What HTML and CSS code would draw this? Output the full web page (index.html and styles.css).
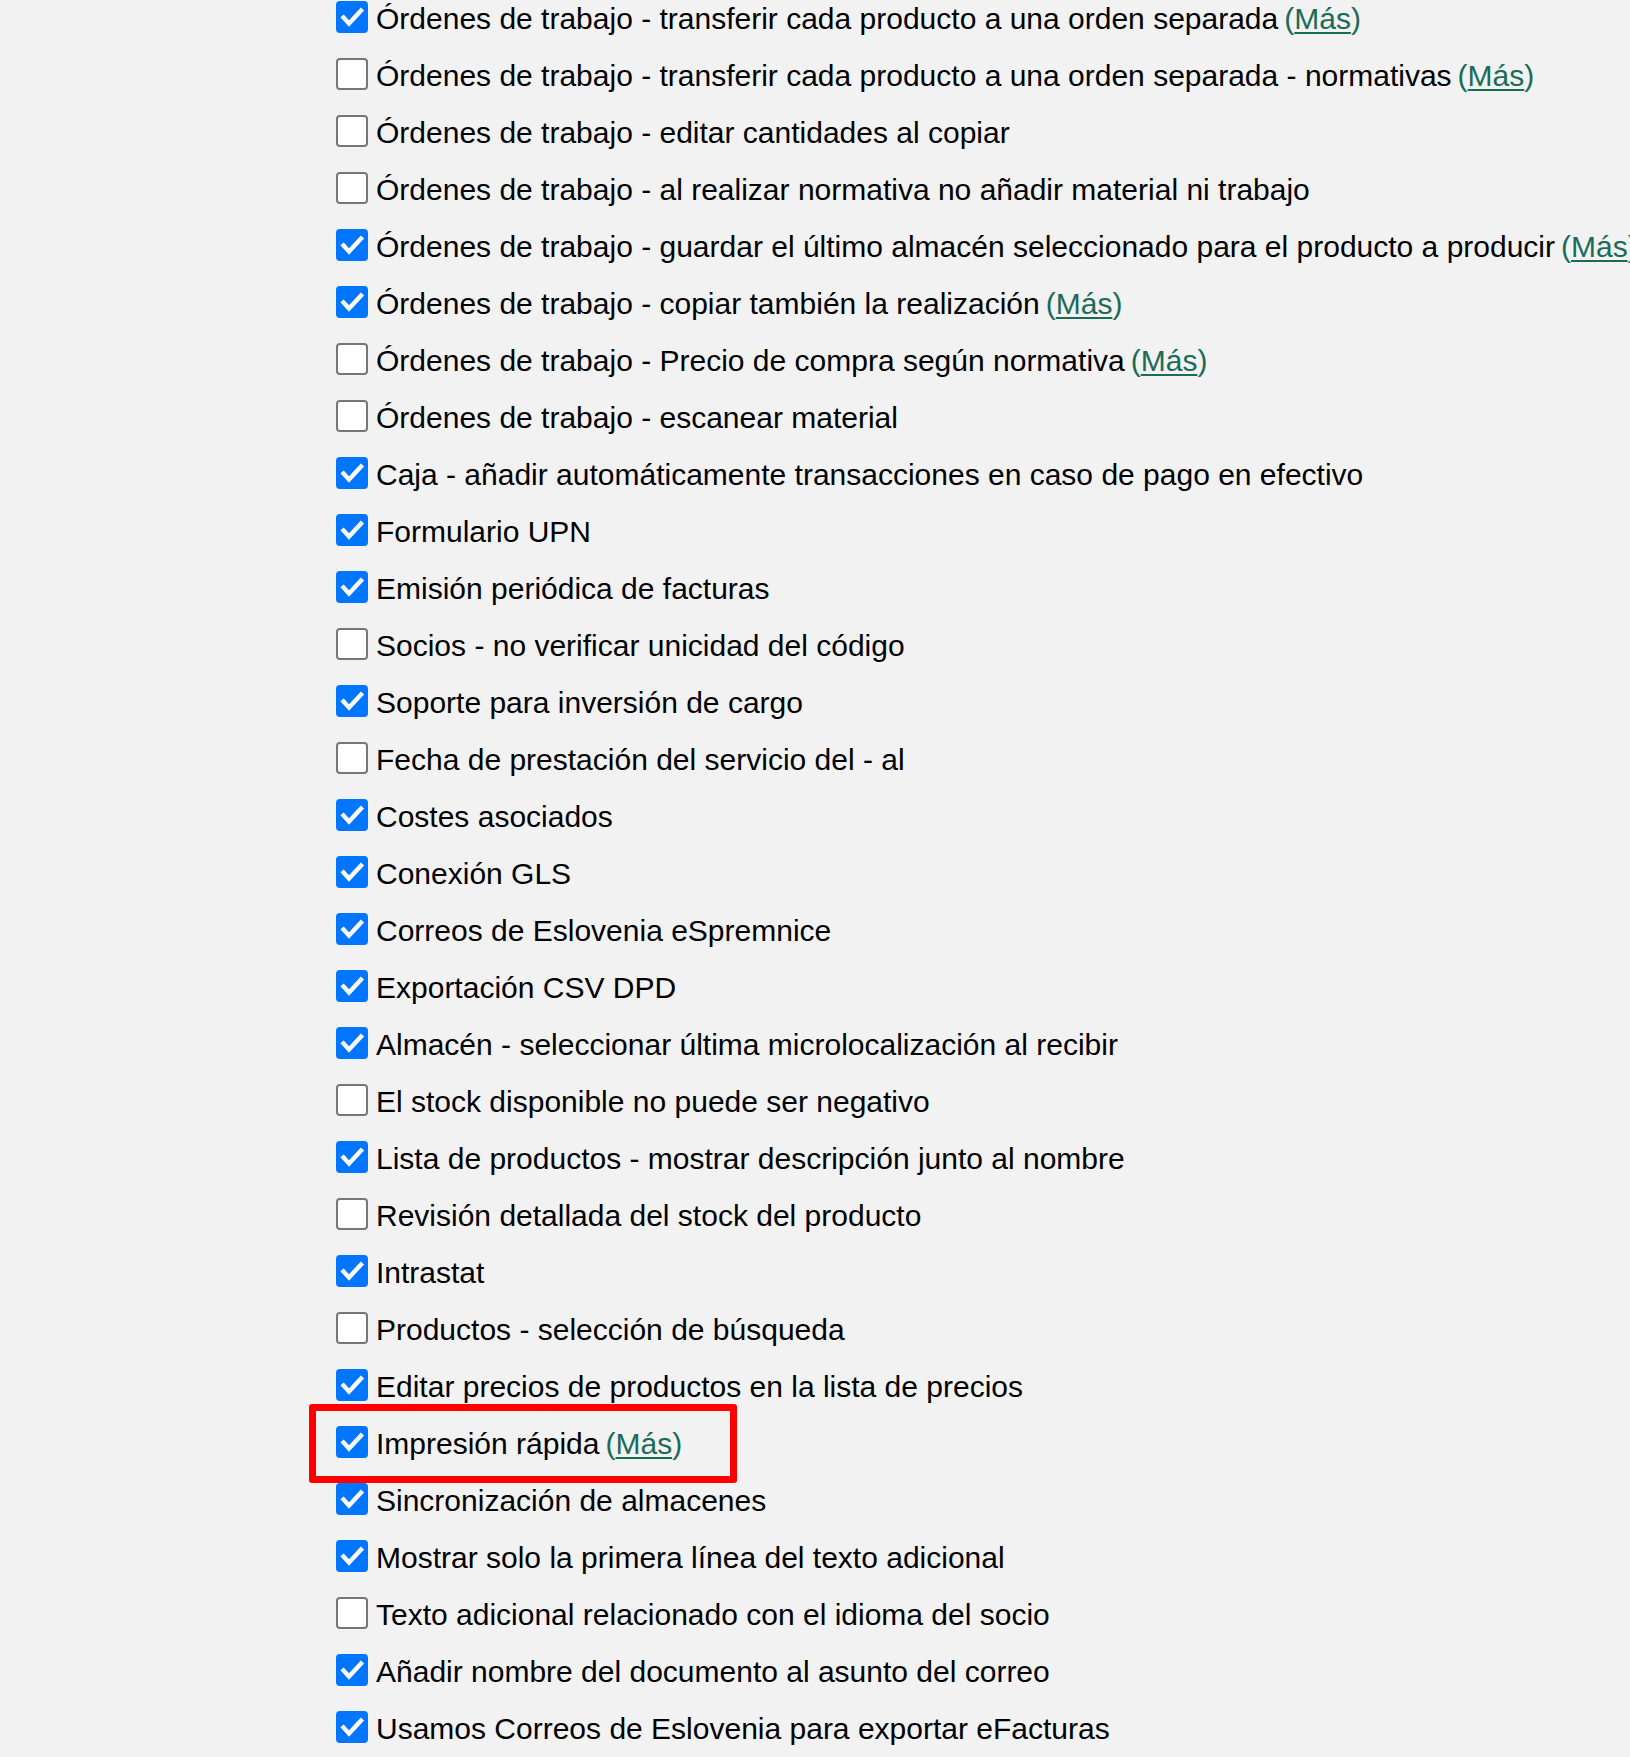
FILE: index.html
```html
<!DOCTYPE html>
<html lang="es">
<head>
<meta charset="utf-8">
<title>Ajustes</title>
<link rel="stylesheet" href="styles.css">
</head>
<body>
<ul class="options">
  <li class="opt"><span class="cb on"></span><span class="label">Órdenes de trabajo - transferir cada producto a una orden separada</span><a class="more" href="#">(<u>Más</u>)</a></li>
  <li class="opt"><span class="cb"></span><span class="label">Órdenes de trabajo - transferir cada producto a una orden separada - normativas</span><a class="more" href="#">(<u>Más</u>)</a></li>
  <li class="opt"><span class="cb"></span><span class="label">Órdenes de trabajo - editar cantidades al copiar</span></li>
  <li class="opt"><span class="cb"></span><span class="label">Órdenes de trabajo - al realizar normativa no añadir material ni trabajo</span></li>
  <li class="opt"><span class="cb on"></span><span class="label">Órdenes de trabajo - guardar el último almacén seleccionado para el producto a producir</span><a class="more" href="#">(<u>Más</u>)</a></li>
  <li class="opt"><span class="cb on"></span><span class="label">Órdenes de trabajo - copiar también la realización</span><a class="more" href="#">(<u>Más</u>)</a></li>
  <li class="opt"><span class="cb"></span><span class="label">Órdenes de trabajo - Precio de compra según normativa</span><a class="more" href="#">(<u>Más</u>)</a></li>
  <li class="opt"><span class="cb"></span><span class="label">Órdenes de trabajo - escanear material</span></li>
  <li class="opt"><span class="cb on"></span><span class="label">Caja - añadir automáticamente transacciones en caso de pago en efectivo</span></li>
  <li class="opt"><span class="cb on"></span><span class="label">Formulario UPN</span></li>
  <li class="opt"><span class="cb on"></span><span class="label">Emisión periódica de facturas</span></li>
  <li class="opt"><span class="cb"></span><span class="label">Socios - no verificar unicidad del código</span></li>
  <li class="opt"><span class="cb on"></span><span class="label">Soporte para inversión de cargo</span></li>
  <li class="opt"><span class="cb"></span><span class="label">Fecha de prestación del servicio del - al</span></li>
  <li class="opt"><span class="cb on"></span><span class="label">Costes asociados</span></li>
  <li class="opt"><span class="cb on"></span><span class="label">Conexión GLS</span></li>
  <li class="opt"><span class="cb on"></span><span class="label">Correos de Eslovenia eSpremnice</span></li>
  <li class="opt"><span class="cb on"></span><span class="label">Exportación CSV DPD</span></li>
  <li class="opt"><span class="cb on"></span><span class="label">Almacén - seleccionar última microlocalización al recibir</span></li>
  <li class="opt"><span class="cb"></span><span class="label">El stock disponible no puede ser negativo</span></li>
  <li class="opt"><span class="cb on"></span><span class="label">Lista de productos - mostrar descripción junto al nombre</span></li>
  <li class="opt"><span class="cb"></span><span class="label">Revisión detallada del stock del producto</span></li>
  <li class="opt"><span class="cb on"></span><span class="label">Intrastat</span></li>
  <li class="opt"><span class="cb"></span><span class="label">Productos - selección de búsqueda</span></li>
  <li class="opt"><span class="cb on"></span><span class="label">Editar precios de productos en la lista de precios</span></li>
  <li class="opt highlight"><span class="cb on"></span><span class="label">Impresión rápida</span><a class="more" href="#">(<u>Más</u>)</a></li>
  <li class="opt"><span class="cb on"></span><span class="label">Sincronización de almacenes</span></li>
  <li class="opt"><span class="cb on"></span><span class="label">Mostrar solo la primera línea del texto adicional</span></li>
  <li class="opt"><span class="cb"></span><span class="label">Texto adicional relacionado con el idioma del socio</span></li>
  <li class="opt"><span class="cb on"></span><span class="label">Añadir nombre del documento al asunto del correo</span></li>
  <li class="opt"><span class="cb on"></span><span class="label">Usamos Correos de Eslovenia para exportar eFacturas</span></li>
</ul>
</body>
</html>
```
FILE: styles.css
```css
html, body {
  margin: 0;
  padding: 0;
  background: #f2f2f2;
  overflow: hidden;
}
body {
  width: 1630px;
  height: 1757px;
  font-family: "Liberation Sans", Arial, sans-serif;
  font-size: 30px;
  color: #000;
}
.options {
  list-style: none;
  margin: 1px 0 0 0;
  padding: 0 0 0 336px;
}
.opt {
  position: relative;
  display: flex;
  align-items: flex-start;
  height: 57px;
  white-space: nowrap;
}
.cb {
  flex: none;
  box-sizing: border-box;
  width: 32px;
  height: 32px;
  border-radius: 4px;
  background: #fff;
  border: 2.5px solid #767676;
  margin-right: 8px;
}
.cb.on {
  border: none;
  background: #0075ff url("data:image/svg+xml,%3Csvg xmlns='http://www.w3.org/2000/svg' viewBox='0 0 32 32'%3E%3Cpath d='M7.5 16.5 L13 22.5 L25 9.5' fill='none' stroke='white' stroke-width='4.4' stroke-linecap='square'/%3E%3C/svg%3E") center / 32px 32px no-repeat;
}
.label {
  line-height: 36px;
}
.more {
  line-height: 36px;
  margin-left: 6px;
  color: #1c6b58;
  text-decoration: none;
}
.more u {
  text-decoration: underline;
  text-decoration-thickness: 2px;
  text-underline-offset: 3px;
}
.highlight::before {
  content: "";
  position: absolute;
  left: -27px;
  top: -22px;
  width: 428px;
  height: 79px;
  box-sizing: border-box;
  border: 7px solid #ff0000;
  border-radius: 3px;
}
```
